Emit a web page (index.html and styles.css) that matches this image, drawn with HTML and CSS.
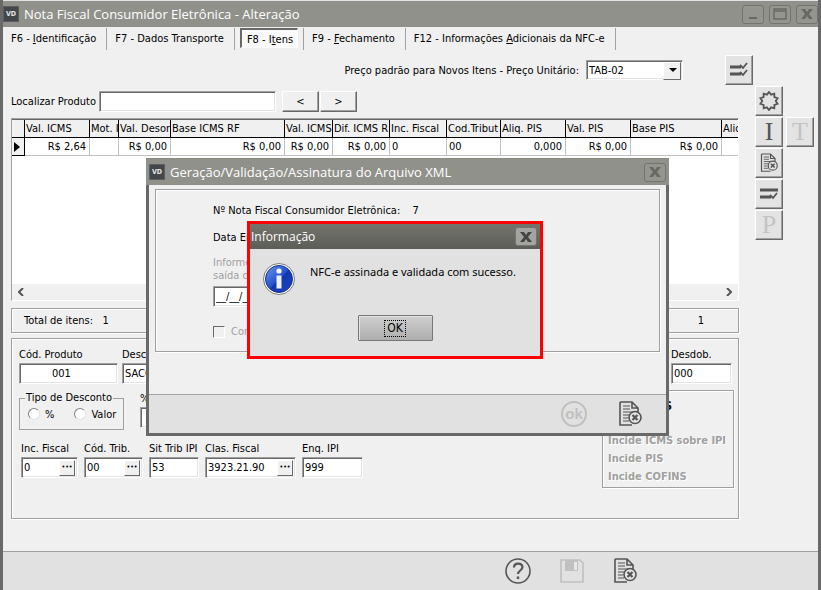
FILE: index.html
```html
<!DOCTYPE html>
<html lang="pt-BR">
<head>
    <meta charset="UTF-8">
    <meta name="viewport" content="width=device-width, initial-scale=1.0">
    <title>Nota Fiscal Consumidor Eletrônica - Alteração</title>
    <link rel="stylesheet" href="styles.css">
</head>
<body>
    <!-- Shared icons -->
    <svg class="icon-defs" aria-hidden="true">
        <symbol id="icon-doc-close" viewBox="0 0 24 26">
            <path d="M2 1h12l6 6v4M2 1v23h12M14 1v6h6" fill="none" stroke="currentColor" stroke-width="1.6"/>
            <path d="M5 5h7M5 8h7M5 11h11M5 14h6M5 17h5M5 20h6" stroke="currentColor" stroke-width="1.2"/>
            <circle cx="17" cy="16.500" r="6" fill="#e4e4e4" stroke="currentColor" stroke-width="1.6"/>
            <path d="M14.500 14l5 5M19.500 14l-5 5" stroke="currentColor" stroke-width="2.200"/>
        </symbol>
        <symbol id="icon-close" viewBox="0 0 12 10">
            <path d="M0 0h4l2 3 2-3h4L8 5l4 5H8L6 7l-2 3H0l4-5z" fill="currentColor"/>
        </symbol>
    </svg>

    <div class="window">
        <header class="titlebar">
            <span class="app-icon">VD</span>
            <h1 class="title">Nota Fiscal Consumidor Eletrônica - Alteração</h1>
            <button class="win-btn" type="button" aria-label="Minimizar">
                <svg width="14" height="12" viewBox="0 0 14 12"><path d="M3 9h8v2H3z" fill="currentColor"/></svg>
            </button>
            <button class="win-btn" type="button" aria-label="Maximizar">
                <svg width="14" height="12" viewBox="0 0 14 12"><path d="M1 1h12v10H1zM1 3h12" fill="none" stroke="currentColor" stroke-width="1.500"/></svg>
            </button>
            <button class="win-btn" type="button" aria-label="Fechar">
                <svg width="12" height="10"><use href="#icon-close"/></svg>
            </button>
        </header>

        <nav class="tabs">
            <button class="tab" type="button">F6 - <u>I</u>dentificação</button>
            <button class="tab" type="button">F7 - Dados Transporte</button>
            <button class="tab active" type="button">F8 - I<u>t</u>ens</button>
            <button class="tab" type="button">F9 - <u>F</u>echamento</button>
            <button class="tab" type="button">F12 - Informações <u>A</u>dicionais da NFC-e</button>
        </nav>

        <div class="price-row">
            <label for="tabela">Preço padrão para Novos Itens - Preço Unitário:</label>
            <span class="select-box">
                <select id="tabela">
                    <option>TAB-02</option>
                </select>
            </span>
            <button class="tool" type="button" aria-label="Aplicar a todos">
                <svg width="20" height="18" viewBox="0 0 20 18"><path d="M1 6h11M1 13h11" stroke="currentColor" stroke-width="3"/><path d="M11 4l3 3 4-5M11 11l3 3 4-5" fill="none" stroke="currentColor" stroke-width="1.8"/></svg>
            </button>
        </div>

        <main class="main">
            <div class="content">
                <div class="search-row">
                    <label for="localizar">Localizar Produto</label>
                    <input class="sunken search-input" id="localizar" type="text">
                    <button class="nav-btn" type="button">&lt;</button>
                    <button class="nav-btn" type="button">&gt;</button>
                </div>

                <div class="grid-box">
                    <div class="grid-view">
                        <table class="items">
                            <colgroup>
                                <col class="w-mark"><col class="w-65"><col class="w-29"><col class="w-52"><col class="w-114"><col class="w-48"><col class="w-57">
                                <col class="w-57"><col class="w-54"><col class="w-65"><col class="w-65"><col class="w-91"><col class="w-65">
                            </colgroup>
                            <thead>
                                <tr>
                                    <th></th>
                                    <th>Val. ICMS</th>
                                    <th>Mot. I</th>
                                    <th>Val. Desor</th>
                                    <th>Base ICMS RF</th>
                                    <th>Val. ICMS</th>
                                    <th>Dif. ICMS R</th>
                                    <th>Inc. Fiscal</th>
                                    <th>Cod.Tribut</th>
                                    <th>Aliq. PIS</th>
                                    <th>Val. PIS</th>
                                    <th>Base PIS</th>
                                    <th>Aliq.</th>
                                </tr>
                            </thead>
                            <tbody>
                                <tr>
                                    <td class="marker"><svg width="6" height="10"><path d="M0 0l6 5-6 5z"/></svg></td>
                                    <td class="num">R$ 2,64</td>
                                    <td></td>
                                    <td class="num">R$ 0,00</td>
                                    <td class="num">R$ 0,00</td>
                                    <td class="num">R$ 0,00</td>
                                    <td class="num">R$ 0,00</td>
                                    <td>0</td>
                                    <td>00</td>
                                    <td class="num">0,000</td>
                                    <td class="num">R$ 0,00</td>
                                    <td class="num">R$ 0,00</td>
                                    <td></td>
                                </tr>
                            </tbody>
                        </table>
                    </div>
                    <div class="scrollbar">
                        <svg width="6" height="8" viewBox="0 0 6 8"><path d="M5 0L1 4l4 4" fill="none" stroke="currentColor" stroke-width="2"/></svg>
                        <svg width="6" height="8" viewBox="0 0 6 8"><path d="M1 0l4 4-4 4" fill="none" stroke="currentColor" stroke-width="2"/></svg>
                    </div>
                </div>

                <div class="totals etched">
                    <span>Total de itens:&nbsp;&nbsp; 1</span>
                    <span>1</span>
                </div>

                <section class="details etched">
                    <div class="row product-row">
                        <div class="field">
                            <label for="codigo">Cód. Produto</label>
                            <input class="sunken w-code" id="codigo" type="text" value="001">
                        </div>
                        <div class="field grow">
                            <label for="descricao">Descrição</label>
                            <input class="sunken" id="descricao" type="text" value="SACOLA">
                        </div>
                        <div class="field">
                            <label for="desdob">Desdob.</label>
                            <input class="sunken w-desdob" id="desdob" type="text" value="000">
                        </div>
                    </div>

                    <div class="details-body">
                        <div class="details-left">
                            <div class="row discount-row">
                                <fieldset class="discount">
                                    <legend>Tipo de Desconto</legend>
                                    <label><input class="radio" type="radio" name="desconto"> %</label>
                                    <label><input class="radio" type="radio" name="desconto"> Valor</label>
                                </fieldset>
                                <div class="field">
                                    <label for="percentual">%</label>
                                    <input class="sunken w-small" id="percentual" type="text">
                                </div>
                            </div>
                            <div class="row tax-row">
                                <div class="field">
                                    <label for="inc">Inc. Fiscal</label>
                                    <span class="sunken lookup w-57"><input id="inc" type="text" value="0"><button type="button" aria-label="Pesquisar">•••</button></span>
                                </div>
                                <div class="field">
                                    <label for="trib">Cód. Trib.</label>
                                    <span class="sunken lookup w-trib"><input id="trib" type="text" value="00"><button type="button" aria-label="Pesquisar">•••</button></span>
                                </div>
                                <div class="field">
                                    <label for="sit">Sit Trib IPI</label>
                                    <input class="sunken w-small" id="sit" type="text" value="53">
                                </div>
                                <div class="field">
                                    <label for="clas">Clas. Fiscal</label>
                                    <span class="sunken lookup w-91"><input id="clas" type="text" value="3923.21.90"><button type="button" aria-label="Pesquisar">•••</button></span>
                                </div>
                                <div class="field">
                                    <label for="enq">Enq. IPI</label>
                                    <input class="sunken w-desdob" id="enq" type="text" value="999">
                                </div>
                            </div>
                        </div>
                        <div class="taxes etched">
                            <h2>IMPOSTOS</h2>
                            <p>Incide IPI</p>
                            <p>Incide ICMS sobre IPI</p>
                            <p>Incide PIS</p>
                            <p>Incide COFINS</p>
                        </div>
                    </div>
                </section>
            </div>

            <aside class="toolbar">
                <button class="tool" type="button" aria-label="Novo">
                    <svg width="20" height="20" viewBox="0 0 20 20"><path d="M10 1l2.100 2.600 3.200-.9.100 3.400 3.200 1.100-1.900 2.800 1.900 2.800-3.200 1.100-.1 3.400-3.200-.9L10 19l-2.100-2.600-3.200.9-.1-3.400-3.200-1.100L3.300 10 1.400 7.200l3.200-1.100.1-3.400 3.200.9z" fill="none" stroke="currentColor" stroke-width="1.8"/></svg>
                </button>
                <button class="tool letter" type="button">I</button>
                <button class="tool letter" type="button" disabled>T</button>
                <button class="tool" type="button" aria-label="Excluir">
                    <svg width="18" height="20"><use href="#icon-doc-close"/></svg>
                </button>
                <button class="tool" type="button" aria-label="Aplicar">
                    <svg width="20" height="18" viewBox="0 0 20 18"><path d="M1 5h18M1 12h11" stroke="currentColor" stroke-width="3"/><path d="M11 10l3 3 4-5" fill="none" stroke="currentColor" stroke-width="1.8"/></svg>
                </button>
                <button class="tool letter" type="button" disabled>P</button>
            </aside>
        </main>

        <footer class="bottom-bar">
            <button class="flat" type="button" aria-label="Ajuda">
                <svg width="26" height="26" viewBox="0 0 26 26" fill="none" stroke="currentColor"><circle cx="13" cy="13" r="12" stroke-width="1.600"/><path d="M9 9.500c0-5 8.500-5 8.500-.5 0 3.500-4.500 3.500-4.500 7" stroke-width="2.200"/><path d="M13 18.500v2.500" stroke-width="2.400"/></svg>
            </button>
            <button class="flat" type="button" aria-label="Salvar" disabled>
                <svg width="24" height="24" viewBox="0 0 24 24"><path d="M1 1h19l3 3v19H1z" fill="none" stroke="currentColor" stroke-width="1.600"/><path d="M5 1h13v11H5z" fill="currentColor"/><path d="M14 3h3v8h-3z" fill="#e8e8e8"/></svg>
            </button>
            <button class="flat" type="button" aria-label="Sair">
                <svg width="24" height="26"><use href="#icon-doc-close"/></svg>
            </button>
        </footer>

        <!-- XML dialog -->
        <div class="dialog" role="dialog" aria-labelledby="xml-title">
            <div class="titlebar">
                <span class="app-icon">VD</span>
                <h2 class="title" id="xml-title">Geração/Validação/Assinatura do Arquivo XML</h2>
                <button class="win-btn" type="button" aria-label="Fechar">
                    <svg width="12" height="10"><use href="#icon-close"/></svg>
                </button>
            </div>
            <div class="dialog-body">
                <div class="dialog-panel etched">
                    <p class="note-number">Nº Nota Fiscal Consumidor Eletrônica: <span>7</span></p>
                    <p>Data Emissão:</p>
                    <label class="muted" for="saida">Informe a data de<br>saída da nota:</label>
                    <input class="sunken w-date" id="saida" type="text" value="__/__/____">
                    <label class="muted check"><input type="checkbox" disabled> Confirmar</label>
                </div>
            </div>
            <div class="dialog-footer">
                <button class="flat" type="button" disabled aria-label="ok">
                    <span class="ok-icon">ok</span>
                </button>
                <button class="flat" type="button" aria-label="Sair">
                    <svg width="24" height="26"><use href="#icon-doc-close"/></svg>
                </button>
            </div>
        </div>

        <!-- Message box -->
        <div class="message" role="alertdialog" aria-labelledby="msg-title">
            <div class="titlebar">
                <h2 class="title" id="msg-title">Informação</h2>
                <button class="win-btn" type="button" aria-label="Fechar">
                    <svg width="12" height="10"><use href="#icon-close"/></svg>
                </button>
            </div>
            <div class="message-body">
                <svg class="info-icon" width="32" height="32" viewBox="0 0 32 32">
                    <defs>
                        <linearGradient id="blue" x1="0" y1="0" x2="1" y2="1">
                            <stop offset="0" stop-color="#6f9cf0"/><stop offset=".5" stop-color="#2450cc"/><stop offset=".51" stop-color="#1238ae"/><stop offset="1" stop-color="#1c46c8"/>
                        </linearGradient>
                    </defs>
                    <circle cx="16" cy="16" r="15.500" fill="#fff" stroke="#7c7c7c"/>
                    <circle cx="16" cy="16" r="13.500" fill="url(#blue)" stroke="#16338c"/>
                    <circle cx="16" cy="8" r="2.600" fill="#fff"/>
                    <path d="M13.500 12.500h5v13h-5z" fill="#eef0f6"/>
                </svg>
                <p>NFC-e assinada e validada com sucesso.</p>
                <button class="ok-btn" type="button"><span>OK</span></button>
            </div>
        </div>
    </div>
</body>
</html>
```
FILE: styles.css
```css
* {
    box-sizing: border-box;
}
body {
    margin: 0;
    font-family: "DejaVu Sans Condensed", "DejaVu Sans", sans-serif;
    font-size: 11px;
    line-height: 13px;
    color: #000;
    background: #f0f0f0;
}
input, button, select {
    font: inherit;
    color: inherit;
    margin: 0;
}
p, h1, h2 {
    margin: 0;
}
.icon-defs {
    position: absolute;
    width: 0;
    height: 0;
}
.window {
    position: relative;
    display: flex;
    flex-direction: column;
    min-height: 100vh;
    border: 0 solid #696969;
    border-width: 0 3px;
    overflow: hidden;
}

/* Title bars */
.titlebar {
    display: flex;
    align-items: center;
    gap: 5px;
    height: 27px;
    padding: 0 3px 0 0;
    margin: 0 -3px;
    background: #91918b;
    border-top: 1px solid #e3e3e3;
    color: #fff;
}
.app-icon {
    width: 16px;
    height: 16px;
    margin-left: 3px;
    background: #44474a;
    border: 1px solid #5c5e60;
    color: #e3e3e3;
    font-size: 7px;
    font-weight: bold;
    line-height: 14px;
    text-align: center;
}
.title {
    flex: 1;
    font-family: "Open Sans", "Noto Sans", sans-serif;
    font-size: 13px;
    font-weight: normal;
    line-height: 18px;
    white-space: nowrap;
}
.win-btn {
    display: flex;
    align-items: center;
    justify-content: center;
    width: 22px;
    height: 19px;
    padding: 0;
    background: #959590;
    border: 1px solid #74746f;
    border-radius: 3px;
    color: #696964;
}

/* Tabs */
.tabs {
    display: flex;
    height: 23px;
    padding-top: 1px;
}
.tab {
    padding: 0 10px 2px 8px;
    background: none;
    border: 0;
    border-right: 1px solid #a0a0a0;
    white-space: nowrap;
}
.tab.active {
    height: 20px;
    margin: 0 5px;
    padding: 1px 4px 0 5px;
    background: #fafafa;
    border: 1px solid #696969;
    border-width: 2px 1px 1px 2px;
    border-right-color: #fff;
    border-bottom-color: #fff;
}
.tab.active + .tab {
    border-left: 1px solid #a0a0a0;
}

/* Raised and sunken pieces */
.etched {
    border: 1px solid #a0a0a0;
    box-shadow: 1px 1px #fff, inset 1px 1px #fff;
}
.sunken {
    height: 21px;
    padding: 0 2px;
    background: #fff;
    border: 1px solid;
    border-color: #a0a0a0 #fff #fff #a0a0a0;
    border-radius: 0;
    box-shadow: inset 1px 1px #696969, inset -1px -1px #e3e3e3;
}
.tool, .nav-btn {
    display: flex;
    align-items: center;
    justify-content: center;
    padding: 0;
    background: #e3e3e3;
    border: 1px solid;
    border-color: #fff #696969 #696969 #fff;
    box-shadow: inset -1px -1px #a0a0a0;
    color: #555;
}
.tool {
    width: 28px;
    height: 30px;
}
.letter {
    font-family: "Liberation Serif", serif;
    font-size: 26px;
    line-height: 26px;
}
.tool:disabled {
    color: #c3c3c3;
}
.nav-btn {
    width: 37px;
    height: 21px;
    background: #f0f0f0;
    color: #000;
}

.price-row {
    display: flex;
    align-items: center;
    justify-content: flex-end;
    height: 36px;
    padding: 4px 65px 0 0;
}
.price-row label {
    margin-right: 7px;
}
.price-row .tool {
    margin-left: 42px;
}
.select-box {
    position: relative;
    width: 97px;
}
.select-box select {
    display: block;
    width: 100%;
    height: 20px;
    padding: 0 2px;
    appearance: none;
    background: #fff;
    border: 1px solid;
    border-color: #a0a0a0 #fff #fff #a0a0a0;
    border-radius: 0;
    box-shadow: inset 1px 1px #696969, inset -1px -1px #e3e3e3;
}
.select-box::before {
    content: "";
    position: absolute;
    top: 2px;
    right: 2px;
    width: 16px;
    height: 16px;
    background: #f0f0f0;
    border: 1px solid;
    border-color: #fff #696969 #696969 #fff;
    pointer-events: none;
}
.select-box::after {
    content: "";
    position: absolute;
    top: 8px;
    right: 6px;
    border: 4px solid transparent;
    border-top-color: #000;
    border-bottom: 0;
    pointer-events: none;
}

.main {
    display: flex;
    flex: 1;
    padding-right: 4px;
}
.content {
    flex: 1;
    min-width: 0;
    padding-left: 8px;
}
.toolbar {
    display: grid;
    grid-template-columns: 28px 28px;
    grid-auto-rows: 30px;
    gap: 1px 3px;
    align-content: start;
    margin-left: 16px;
}
.toolbar .tool {
    grid-column: 1;
}
.toolbar .letter + .letter {
    grid-column: 2;
    grid-row: 2;
}

.search-row {
    display: flex;
    align-items: center;
    gap: 1px;
    padding: 5px 0 6px;
}
.search-row label {
    width: 87px;
    white-space: nowrap;
}
.search-input {
    width: 177px;
    margin-right: 5px;
}

/* Items grid */
.grid-box {
    border: 1px solid #a0a0a0;
    border-right-color: #fff;
    border-bottom-color: #fff;
    box-shadow: inset 0 1px #696969;
    background: #fff;
}
.grid-view {
    height: 165px;
    padding-top: 1px;
    overflow: hidden;
}
.items {
    width: 775px;
    border-collapse: separate;
    border-spacing: 0;
    table-layout: fixed;
}
.items th, .items td {
    height: 18px;
    padding: 0 3px 0 2px;
    overflow: hidden;
    white-space: nowrap;
    text-align: left;
    font-weight: normal;
}
.items th {
    padding: 0 0 0 1px;
    background: #f0f0f0;
    border-right: 1px solid #000;
    border-bottom: 1px solid #000;
}
.items td {
    border-right: 1px solid #c0c0c0;
    border-bottom: 1px solid #c0c0c0;
}
.items .num {
    text-align: right;
}
.items .marker {
    background: #f0f0f0;
    border-color: #000;
}
.marker svg {
    display: block;
}
.w-mark { width: 13px; }
.w-29 { width: 29px; }
.w-48 { width: 48px; }
.w-52 { width: 52px; }
.w-54 { width: 54px; }
.w-57 { width: 57px; }
.w-65 { width: 65px; }
.w-91 { width: 91px; }
.w-114 { width: 114px; }
.scrollbar {
    display: flex;
    align-items: center;
    justify-content: space-between;
    height: 16px;
    padding: 0 6px;
    background: #f0f0f0;
    color: #555;
}

.totals {
    display: flex;
    align-items: center;
    justify-content: space-between;
    height: 25px;
    margin-top: 7px;
    padding: 0 34px 0 12px;
}

/* Item details */
.details {
    height: 181px;
    margin: 5px 0 32px;
    padding: 9px 4px 0 7px;
}
.row {
    display: flex;
}
.field {
    display: flex;
    flex-direction: column;
    gap: 2px;
}
.field label {
    white-space: nowrap;
}
.grow {
    flex: 1;
}
.product-row {
    gap: 4px;
    padding-right: 2px;
}
.details-body {
    display: flex;
    justify-content: space-between;
    margin-top: 6px;
}
.w-code {
    width: 99px;
    padding-left: 32px;
}
.w-desdob { width: 61px; }
.w-small { width: 50px; }
.w-trib { width: 59px; }
.w-date { width: 80px; }
.discount-row {
    gap: 16px;
    padding-top: 2px;
}
.discount {
    display: flex;
    gap: 20px;
    width: 105px;
    height: 38px;
    margin: 0;
    padding: 2px 0 0 8px;
    border: 1px solid #a0a0a0;
}
.discount legend {
    padding: 0 1px;
    margin-left: -3px;
    line-height: 12px;
}
.discount label {
    display: flex;
    align-items: center;
    gap: 5px;
    height: 16px;
}
.radio {
    width: 12px;
    height: 12px;
    appearance: none;
    background: #fff;
    border: 1px solid;
    border-color: #808080 #e3e3e3 #e3e3e3 #808080;
    border-radius: 50%;
}
.tax-row {
    gap: 6px;
    padding: 12px 0 0 2px;
}
.lookup {
    display: flex;
    align-items: center;
}
.lookup input {
    flex: 1;
    width: 0;
    padding: 0;
    border: 0;
    background: none;
}
.lookup button {
    width: 16px;
    height: 16px;
    padding: 0 0 2px;
    background: #f0f0f0;
    border: 1px solid;
    border-color: #fff #696969 #696969 #fff;
    font-size: 7px;
    line-height: 12px;
}
.taxes {
    width: 132px;
    height: 98px;
    padding: 7px 0 0 5px;
    font-weight: bold;
    line-height: 18px;
    white-space: nowrap;
}
.taxes h2 {
    font-size: 12px;
    line-height: 16px;
}
.taxes p {
    color: #a0a0a0;
    text-shadow: 1px 1px #fff;
}

/* Bottom bars */
.bottom-bar, .dialog-footer {
    display: flex;
    align-items: center;
    justify-content: flex-end;
    height: 39px;
    background: #e1e1e1;
    border-top: 1px solid #a0a0a0;
}
.bottom-bar {
    gap: 29px;
    padding-right: 181px;
}
.flat {
    display: flex;
    padding: 0;
    background: none;
    border: 0;
    color: #555;
}
.flat:disabled {
    color: #c0c0c0;
}

/* XML dialog */
.dialog {
    position: absolute;
    top: 158px;
    left: 143px;
    width: 523px;
    border: 3px solid #696969;
    border-top: 0;
    background: #f0f0f0;
}
.dialog .titlebar {
    border-top-color: #8a8a85;
}
.dialog-body {
    padding: 4px 6px 42px;
}
.dialog-panel {
    height: 163px;
    padding: 14px 57px 0;
}
.note-number {
    margin-bottom: 14px;
}
.note-number span {
    margin-left: 9px;
}
.dialog-panel .muted {
    display: block;
    margin: 12px 0 4px;
    color: #a0a0a0;
}
.dialog-panel .check {
    display: flex;
    align-items: center;
    gap: 6px;
    margin-top: 18px;
}
.check input {
    width: 12px;
    height: 12px;
    appearance: none;
    border: 1px solid;
    border-color: #696969 #fff #fff #696969;
}
.dialog-footer {
    gap: 31px;
    padding-right: 24px;
}
.ok-icon {
    width: 26px;
    height: 26px;
    border: 2px solid #c0c0c0;
    border-radius: 50%;
    font-family: "Liberation Sans", sans-serif;
    font-size: 15px;
    font-weight: bold;
    line-height: 21px;
    text-align: center;
}

/* Message box */
.message {
    position: absolute;
    top: 221px;
    left: 244px;
    width: 296px;
    border: 3px solid #f00;
    background: #e1e1e1;
}
.message .titlebar {
    height: 25px;
    margin: 0;
    padding-left: 1px;
    border: 0;
    background: linear-gradient(#74746d, #5d5d58);
}
.message .title {
    font-size: 12px;
}
.message .win-btn {
    background: #a3a3a0;
    color: #444;
}
.message-body {
    display: grid;
    grid-template-columns: 32px 1fr;
    column-gap: 15px;
    padding: 14px 13px 15px;
}
.message-body p {
    padding-top: 2px;
    font-family: "Noto Sans", sans-serif;
    font-size: 11px;
    white-space: nowrap;
}
.ok-btn {
    grid-column: 1 / 3;
    justify-self: center;
    width: 75px;
    height: 26px;
    margin-top: 20px;
    padding: 0;
    background: linear-gradient(#cfcfcf, #aeaeae);
    border: 1px solid #777;
    border-radius: 1px;
    box-shadow: inset 1px 1px #e3e3e3;
    font-size: 12px;
}
.ok-btn span {
    display: inline-block;
    padding: 1px 2px;
    border: 1px dotted #000;
}
```
